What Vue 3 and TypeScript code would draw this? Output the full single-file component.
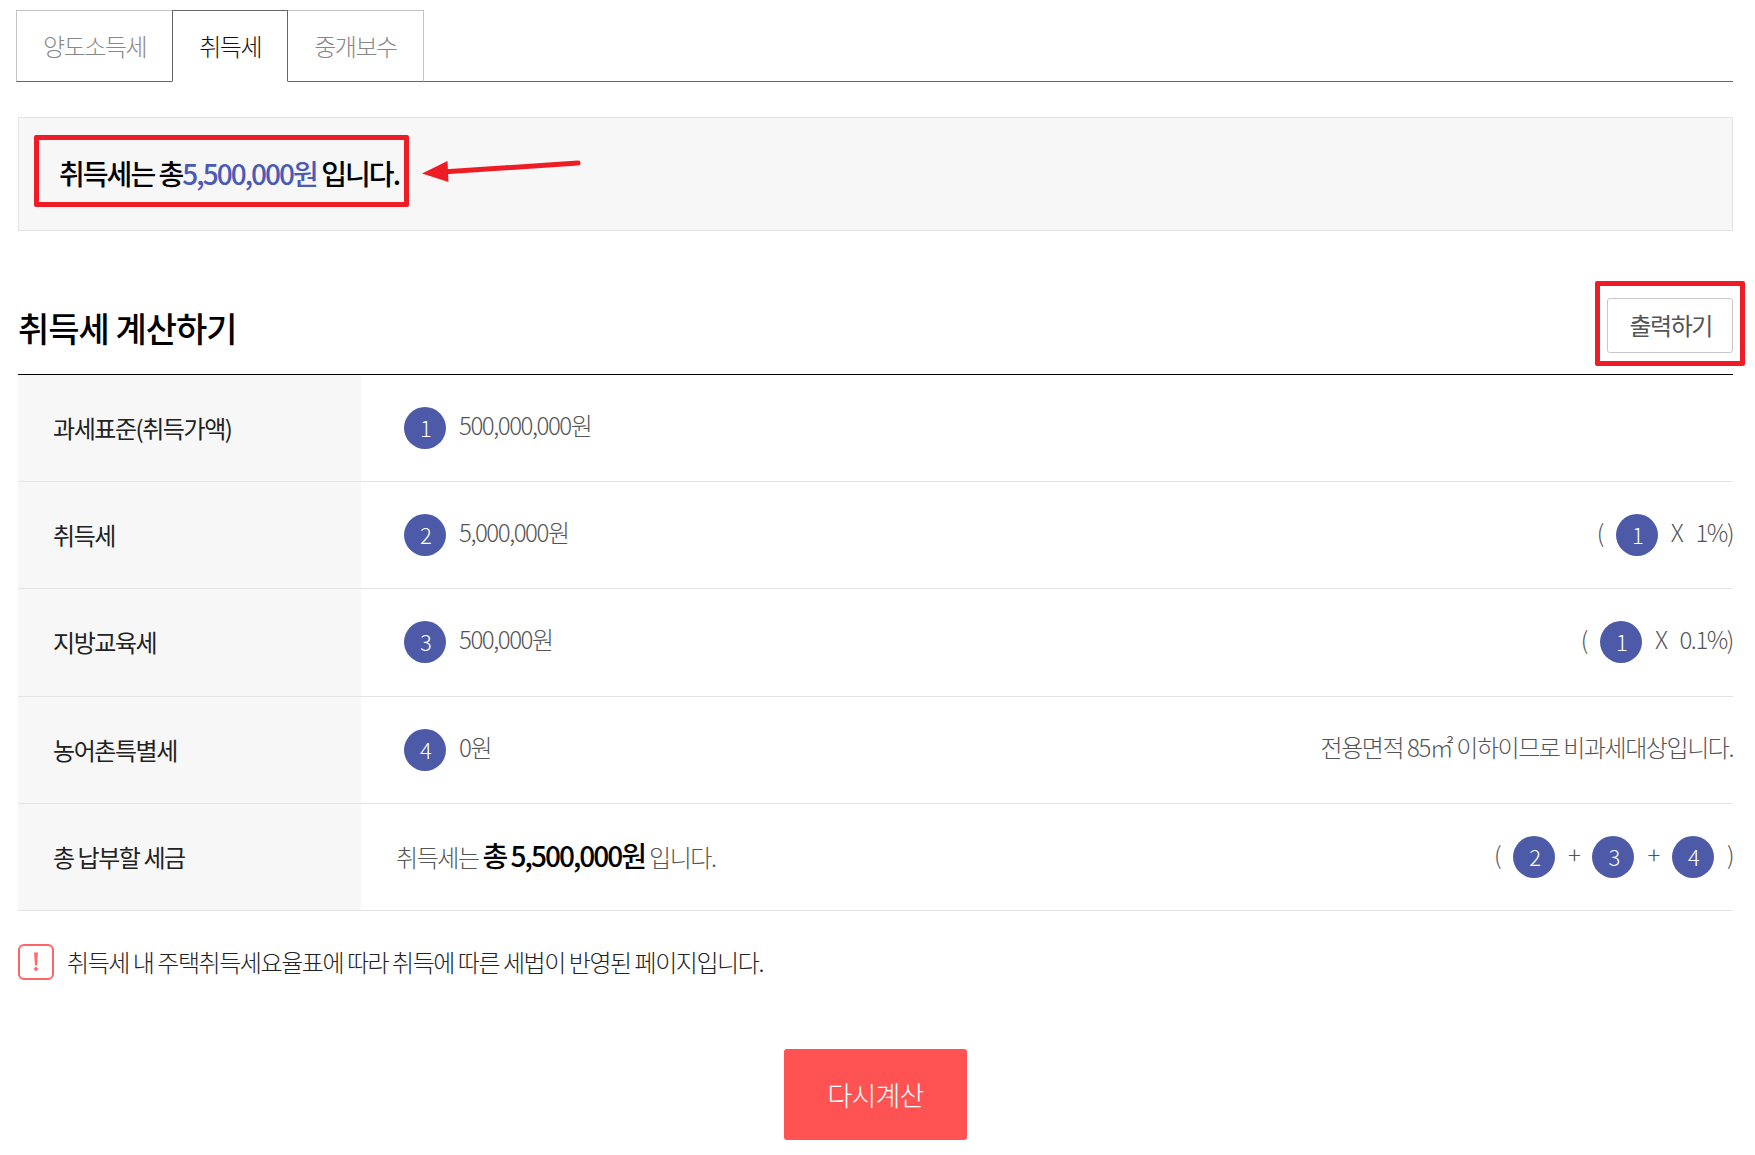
<script setup lang="ts">
import { ref } from 'vue'

interface Token {
  kind: 'text' | 'badge'
  value: string
}

interface TaxRow {
  label: string
  badge: number
  amount: string
  formula: Token[]
}

const text = (value: string): Token => ({ kind: 'text', value })
const badge = (value: string): Token => ({ kind: 'badge', value })

const tabs: string[] = ['양도소득세', '취득세', '중개보수']
const activeTab = ref('취득세')

const rows: TaxRow[] = [
  { label: '과세표준(취득가액)', badge: 1, amount: '500,000,000원', formula: [] },
  { label: '취득세', badge: 2, amount: '5,000,000원', formula: [text('('), badge('1'), text('X'), text('1%)')] },
  { label: '지방교육세', badge: 3, amount: '500,000원', formula: [text('('), badge('1'), text('X'), text('0.1%)')] },
  { label: '농어촌특별세', badge: 4, amount: '0원', formula: [text('전용면적 85㎡ 이하이므로 비과세대상입니다.')] },
]

const totalFormula: Token[] = [
  text('('), badge('2'), text('+'), badge('3'), text('+'), badge('4'), text(')'),
]
</script>

<template>
  <main class="page">
    <nav class="tabs">
      <button
        v-for="tab in tabs"
        :key="tab"
        type="button"
        class="tab"
        :class="{ active: tab === activeTab }"
        @click="activeTab = tab"
      >{{ tab }}</button>
    </nav>

    <section class="summary">
      <p class="summary-text">취득세는 총<strong>5,500,000원</strong> 입니다.</p>
      <svg class="arrow" width="164" height="30" viewBox="0 0 164 30" aria-hidden="true">
        <path d="M20 15 L156 6" stroke="#ee1c24" stroke-width="5" stroke-linecap="round" />
        <path d="M0 16.500 L25.500 4 L26.500 25 Z" fill="#ee1c24" />
      </svg>
    </section>

    <header class="heading">
      <h1>취득세 계산하기</h1>
      <div class="print-wrap">
        <button type="button" class="print">출력하기</button>
      </div>
    </header>

    <table class="result">
      <tbody>
        <tr v-for="row in rows" :key="row.label">
          <th scope="row">{{ row.label }}</th>
          <td>
            <div class="cell">
              <div class="amount">
                <span class="badge">{{ row.badge }}</span>
                <span class="lift">{{ row.amount }}</span>
              </div>
              <div class="formula">
                <span
                  v-for="(token, i) in row.formula"
                  :key="i"
                  :class="token.kind === 'badge' ? 'badge' : 'lift'"
                >{{ token.value }}</span>
              </div>
            </div>
          </td>
        </tr>
        <tr>
          <th scope="row">총 납부할 세금</th>
          <td>
            <div class="cell">
              <p class="total">취득세는 <strong>총 5,500,000원</strong> 입니다.</p>
              <div class="formula">
                <span
                  v-for="(token, i) in totalFormula"
                  :key="i"
                  :class="token.kind === 'badge' ? 'badge' : 'lift'"
                >{{ token.value }}</span>
              </div>
            </div>
          </td>
        </tr>
      </tbody>
    </table>

    <p class="notice">
      <svg width="36" height="36" viewBox="0 0 36 36" aria-hidden="true">
        <rect x="1" y="1" width="34" height="34" rx="5" fill="none" stroke="#ff6464" stroke-width="2" />
        <path d="M16 8.500 h4 l-1 13 h-2 Z" fill="#ff6b6b" />
        <path d="M18 22.500 l2.500 2.500 l-2.500 2.500 l-2.500 -2.500 Z" fill="#ff6b6b" />
      </svg>
      <span>취득세 내 주택취득세요율표에 따라 취득에 따른 세법이 반영된 페이지입니다.</span>
    </p>

    <div class="actions">
      <button type="button" class="retry">다시계산</button>
    </div>
  </main>
</template>

<style>
body {
  margin: 0;
  background: #fff;
}
</style>

<style scoped>
.page {
  box-sizing: border-box;
  padding: 10px 22px 14px 18px;
  font-family: "Noto Sans CJK KR", sans-serif;
  font-size: 24px;
  font-weight: 300;
  line-height: 36px;
  letter-spacing: -0.06em;
  color: #555;
}

button {
  font: inherit;
  letter-spacing: inherit;
  cursor: pointer;
}

p,
h1 {
  margin: 0;
}

.tabs {
  display: flex;
  margin-left: -2px;
  background: linear-gradient(#666, #666) 2px 100% / 100% 1px no-repeat;
}

.tab {
  height: 72px;
  padding: 0 26px;
  border: 1px solid #c4c4c4;
  border-bottom-color: #666;
  border-right: 0;
  background: #fff;
  color: #888;
}

.tab:last-child {
  border-right: 1px solid #c4c4c4;
}

.tab.active {
  border-color: #666;
  border-bottom-color: #fff;
  border-right: 1px solid #666;
  color: #111;
}

.tab.active + .tab {
  border-left: 0;
}

.summary {
  display: flex;
  align-items: flex-start;
  gap: 13px;
  height: 78px;
  margin-top: 35px;
  padding: 17px 15px;
  border: 1px solid #e4e4e4;
  background: #f7f7f7;
}

.summary-text {
  padding: 15px 5px 11px 20px;
  border: 5px solid #ee1c24;
  border-radius: 2px;
  font-size: 28px;
  font-weight: 500;
  letter-spacing: -0.07em;
  color: #000;
  white-space: nowrap;
}

.summary-text strong {
  font-weight: 500;
  color: #4c5ab5;
}

.arrow {
  margin-top: 22px;
}

.heading {
  display: flex;
  justify-content: space-between;
  align-items: center;
  margin-top: 67px;
  padding-bottom: 21px;
}

h1 {
  padding-top: 4px;
  font-size: 34px;
  font-weight: 500;
  line-height: 48px;
  letter-spacing: -0.03em;
  color: #000;
}

.print-wrap {
  position: relative;
}

.print-wrap::after {
  content: "";
  position: absolute;
  inset: -17px -12px -13px -12px;
  border: 5px solid #ee1c24;
  border-radius: 2px;
  pointer-events: none;
}

.print {
  display: block;
  height: 55px;
  padding: 0 20px 2px 21px;
  border: 1px solid #c8c8c8;
  border-radius: 3px;
  background: #fff;
  color: #555;
  font-weight: 400;
}

.result {
  width: 100%;
  height: 537px;
  border-collapse: collapse;
  border-top: 1px solid #000;
}

.result tr {
  border-bottom: 1px solid #e4e4e4;
}

.result th {
  box-sizing: border-box;
  width: 20%;
  padding: 0 0 0 35px;
  background: #f7f7f7;
  color: #222;
  font-weight: 400;
  text-align: left;
}

.result td {
  padding: 0 0 0 35px;
}

.cell {
  display: flex;
  justify-content: space-between;
  align-items: center;
}

.amount,
.formula {
  display: flex;
  align-items: center;
  gap: 13px;
}

.amount {
  padding-left: 8px;
}

.badge {
  box-sizing: border-box;
  width: 42px;
  height: 42px;
  padding-left: 2px;
  border-radius: 50%;
  background: #4c5aa8;
  color: #fff;
  font-size: 22px;
  line-height: 40px;
  letter-spacing: 0;
  text-align: center;
}

.lift {
  padding-bottom: 6px;
}

.total {
  padding-bottom: 2px;
}

.total strong {
  font-size: 28px;
  font-weight: 500;
  letter-spacing: -0.07em;
  color: #000;
}

.notice {
  display: flex;
  align-items: center;
  gap: 13px;
  margin-top: 33px;
  color: #222;
}

.notice span {
  padding-bottom: 2px;
}

.notice svg {
  margin-top: -2px;
}

.actions {
  display: flex;
  justify-content: center;
  margin-top: 67px;
}

.retry {
  height: 91px;
  padding: 0 43px;
  border: 0;
  border-radius: 3px;
  background: #ff5252;
  color: #fff;
  font-size: 27px;
  letter-spacing: -0.03em;
}
</style>
